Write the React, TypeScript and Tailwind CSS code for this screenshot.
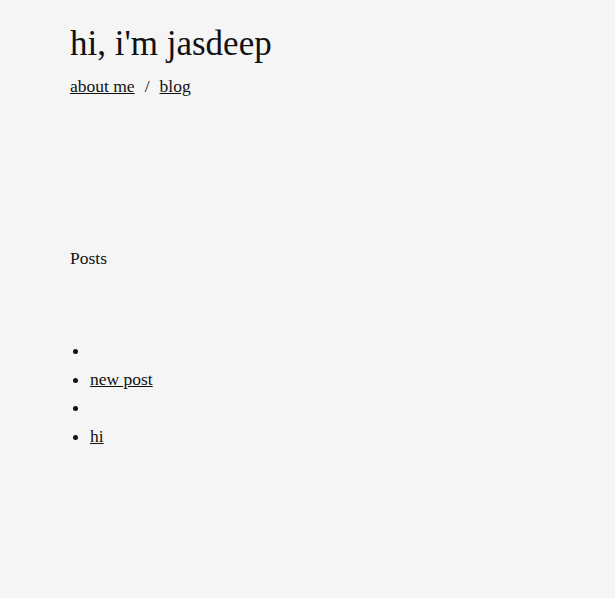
import React from 'react';

const posts = ['', 'new post', '', 'hi'];

const App = () => {
  return (
    <div className="min-h-[598px] bg-[#f5f5f5] text-[#111] font-['Liberation_Serif',serif] px-[70px] pt-[22px]">
      <header>
        <h1 className="text-[35px] leading-[44px]">hi, i'm jasdeep</h1>
        <nav className="mt-[8px] text-[17.5px] leading-[24px] flex items-center">
          <a href="#about" className="underline">about me</a>
          <span className="mx-[10px]">/</span>
          <a href="#blog" className="underline">blog</a>
        </nav>
      </header>
      <main className="mt-[148px]">
        <h2 className="text-[17.5px] leading-[24px]">Posts</h2>
        <ul className="mt-[66px] list-disc pl-[20px] text-[17.5px]">
          {posts.map((p, i) => (
            <li key={i} className="h-[28.6px] leading-[28.6px]">
              {p && <a href="#post" className="underline">{p}</a>}
            </li>
          ))}
        </ul>
      </main>
    </div>
  );
};

export default App;
